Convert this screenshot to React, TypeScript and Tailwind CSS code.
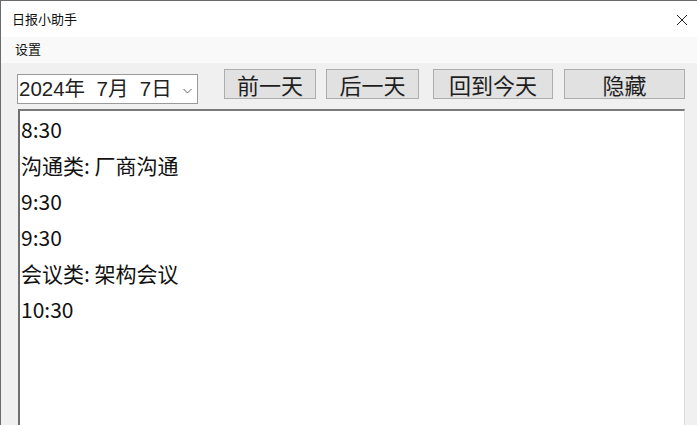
import React from "react";

const lines = ["8:30", "沟通类: 厂商沟通", "9:30", "9:30", "会议类: 架构会议", "10:30"];

const App: React.FC = () => {
  const btn =
    "flex h-[30px] shrink-0 items-center justify-center border border-[#adadad] bg-[#e1e1e1] text-[22px] leading-none text-[#1e1e1e]";

  return (
    <div
      className="relative flex h-[425px] w-[697px] flex-col overflow-hidden border-l border-t border-[#6b6b6b] bg-[#f0f0f0] text-[#111]"
      style={{ fontFamily: '"Noto Sans CJK SC", "Noto Sans", sans-serif' }}
    >
      {/* Title bar */}
      <div className="flex h-[36px] shrink-0 items-center justify-between bg-white pb-[1px] pl-[11px] pr-[9px]">
        <span className="text-[13px] leading-none">日报小助手</span>
        <svg width="12" height="12" viewBox="0 0 12 12" className="mt-[2px]">
          <path d="M1 1 L11 11 M11 1 L1 11" stroke="#222" strokeWidth="1" fill="none" />
        </svg>
      </div>

      {/* Menu bar */}
      <div className="flex h-[26px] shrink-0 items-center bg-[#f9f9f9] pb-[3px] pl-[14px]">
        <span className="text-[13px] leading-none">设置</span>
      </div>

      {/* Toolbar */}
      <div className="mt-[6px] flex shrink-0 items-start pl-[16px]">
        <div className="mt-[5px] flex h-[30px] w-[181px] shrink-0 items-center justify-between border border-[#9a9a9a] bg-white pl-[1px] pr-[5px]">
          <span
            className="whitespace-nowrap text-[20.5px] leading-none text-[#222]"
            style={{ fontFamily: '"Liberation Sans", "Noto Sans CJK SC", sans-serif' }}
          >
            2024年&nbsp;&nbsp;7月&nbsp;&nbsp;7日
          </span>
          <svg width="9" height="6" viewBox="0 0 9 6" className="mt-[3px] shrink-0">
            <path d="M0.5 1 L4.5 5 L8.5 1" stroke="#666" strokeWidth="1" fill="none" />
          </svg>
        </div>
        <div className={`${btn} ml-[26px] w-[92px]`}>前一天</div>
        <div className={`${btn} ml-[10px] w-[93px]`}>后一天</div>
        <div className={`${btn} ml-[14px] w-[120px]`}>回到今天</div>
        <div className={`${btn} ml-[11px] w-[121px]`}>隐藏</div>
      </div>

      {/* Text area */}
      <div className="ml-[17px] mt-[5px] flex w-[667px] flex-1 flex-col border-l-2 border-r border-t-2 border-l-[#6e6e6e] border-r-[#d9d9d9] border-t-[#7a7a7a] bg-white pl-[1px]">
        {lines.map((t, i) => (
          <div key={i} className="h-[36px] whitespace-nowrap text-[21px] leading-[36px] text-[#111]">
            {t}
          </div>
        ))}
      </div>
    </div>
  );
};

export default App;
